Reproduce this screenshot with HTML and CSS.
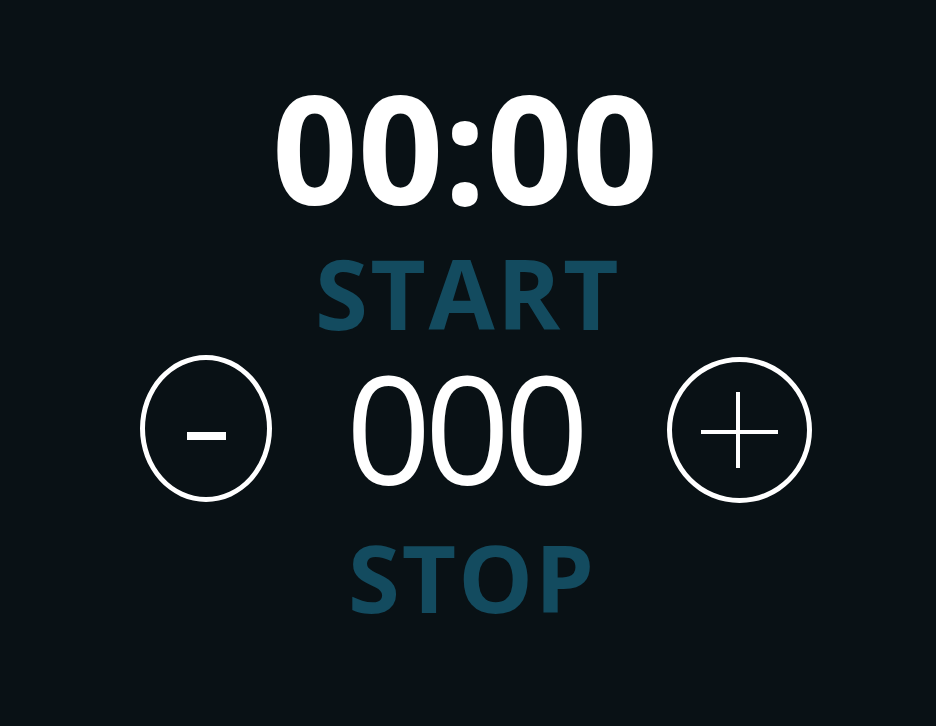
FILE: index.html
```html
<!DOCTYPE html>
<html lang="en">
<head>
<meta charset="utf-8">
<title>Timer</title>
<link rel="stylesheet" href="styles.css">
</head>
<body>
<main class="timer">
  <div class="clock">00:00</div>
  <button class="action start">START</button>
  <div class="row">
    <button class="round minus" aria-label="decrease">
      <svg width="122" height="137" viewBox="0 0 122 137"><rect x="42" y="72" width="39" height="8" fill="#fff"/></svg>
    </button>
    <div class="count">000</div>
    <button class="round plus" aria-label="increase">
      <svg width="135" height="136" viewBox="0 0 135 136"><rect x="29" y="68" width="77" height="4" fill="#fff"/><rect x="64" y="30" width="4" height="76" fill="#fff"/></svg>
    </button>
  </div>
  <button class="action stop">STOP</button>
</main>
</body>
</html>
```
FILE: styles.css
```css
html, body {
  margin: 0;
  padding: 0;
  background: #091115;
  height: 100%;
}
.timer {
  display: flex;
  flex-direction: column;
  align-items: center;
  padding-top: 72px;
  font-family: "Open Sans", "DejaVu Sans", sans-serif;
  color: #fff;
}
.clock {
  font-size: 150px;
  font-weight: 700;
  line-height: 1;
  margin-right: 6px;
}
.action {
  background: none;
  border: 0;
  padding: 0;
  font-family: inherit;
  font-weight: 700;
  color: #134b5f;
  line-height: 1;
  letter-spacing: 2.5px;
}
.start {
  font-size: 96px;
  margin-top: 23px;
}
.stop {
  font-size: 94px;
  margin-top: 28px;
  margin-left: 8px;
  letter-spacing: 2px;
}
.row {
  display: flex;
  align-items: center;
  margin-top: 11px;
  margin-left: 16px;
  height: 150px;
}
.count {
  font-size: 150px;
  font-weight: 400;
  line-height: 1;
  letter-spacing: -7px;
  margin: 0 85px 0 74px;
}
.round {
  box-sizing: border-box;
  border: 5px solid #fff;
  border-radius: 50%;
  background: none;
  padding: 0;
  display: flex;
}
.minus {
  width: 132px;
  height: 147px;
  margin-top: 3px;
}
.plus {
  width: 145px;
  height: 146px;
  margin-top: 6px;
}
```
